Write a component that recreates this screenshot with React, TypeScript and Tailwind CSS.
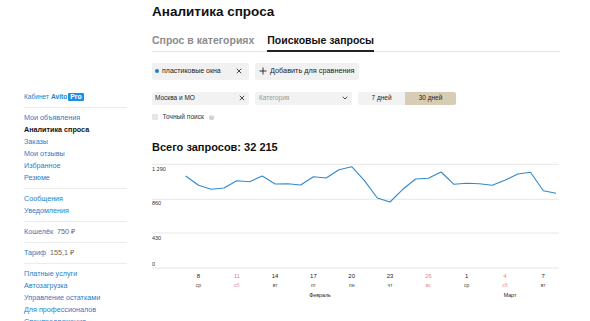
import React from 'react';

const font = { fontFamily: '"Liberation Sans", Arial, sans-serif' };

const groups: { label: string; extra?: string; active?: boolean }[][] = [
    [
        { label: 'Мои объявления' },
        { label: 'Аналитика спроса', active: true },
        { label: 'Заказы' },
        { label: 'Мои отзывы' },
        { label: 'Избранное' },
        { label: 'Резюме' },
    ],
    [{ label: 'Сообщения' }, { label: 'Уведомления' }],
    [{ label: 'Кошелёк', extra: '750 ₽' }],
    [{ label: 'Тариф', extra: '155,1 ₽' }],
    [
        { label: 'Платные услуги' },
        { label: 'Автозагрузка' },
        { label: 'Управление остатками' },
        { label: 'Для профессионалов' },
        { label: 'Спецпредложения' },
    ],
];

// запросов в день, 7 февраля — 8 марта
const values = [
    1144, 1029, 979, 995, 1086, 1074, 1144, 1045, 1049, 1033, 1136, 1120, 1223, 1260, 1086,
    871, 821, 979, 1107, 1116, 1194, 1041, 1054, 1049, 1029, 1091, 1169, 1190, 962, 929,
];

const ticks = [
    { i: 1, d: '8', w: 'ср' },
    { i: 4, d: '11', w: 'сб', red: true },
    { i: 7, d: '14', w: 'вт' },
    { i: 10, d: '17', w: 'пт' },
    { i: 13, d: '20', w: 'пн' },
    { i: 16, d: '23', w: 'чт' },
    { i: 19, d: '26', w: 'вс', red: true },
    { i: 22, d: '1', w: 'ср' },
    { i: 25, d: '4', w: 'сб', red: true },
    { i: 28, d: '7', w: 'вт' },
];

function Sidebar() {
    return (
        <div className="w-[152px] shrink-0 pl-[24px] pt-[91px]">
            <div className="w-[103px]">
                <div className="flex h-[12px] items-center text-[6.6px] text-[#2a7dc6]">
                    <span>Кабинет</span>
                    <span className="ml-[2px] font-bold">Avito</span>
                    <span className="ml-[1px] rounded-[1px] bg-[#1b8ee6] px-[2px] text-[6.8px] leading-[8.5px] font-bold text-white">Pro</span>
                </div>
                {groups.map((g, gi) => (
                    <div key={gi}>
                        <div className="my-[4px] h-px bg-[#ececec]" />
                        {g.map((it) => (
                            <div key={it.label} className="flex h-[12px] items-center text-[7.2px]">
                                <span className={it.active ? 'font-bold text-[#111]' : 'text-[#2a7dc6]'}>{it.label}</span>
                                {it.extra && <span className="ml-[4px] text-[#666]">{it.extra}</span>}
                            </div>
                        ))}
                    </div>
                ))}
            </div>
        </div>
    );
}

function Cross() {
    return (
        <svg width="6" height="6" viewBox="0 0 6 6" className="shrink-0">
            <path d="M0.8 0.8 L5.2 5.2 M5.2 0.8 L0.8 5.2" stroke="#333" strokeWidth="0.9" />
        </svg>
    );
}

function Chart() {
    const x0 = 33.7;
    const step = 12.77;
    const yOf = (v: number) => 108 - (v / 1290) * 103.7;
    const pts = values.map((v, i) => `${(x0 + i * step).toFixed(1)},${yOf(v).toFixed(1)}`).join(' ');
    const grid = [
        { y: 4.3, label: '1 290', ty: 11 },
        { y: 39.3, label: '860', ty: 45 },
        { y: 73, label: '430', ty: 80 },
        { y: 108, label: '0', ty: 106 },
    ];
    return (
        <svg width="408" height="141" viewBox="0 0 408 141" className="mt-[6px] block" style={font}>
            {grid.map((g) => (
                <g key={g.label}>
                    <line x1="0" x2="407" y1={g.y} y2={g.y} stroke="#e6e6e6" strokeWidth="1" />
                    <text x="0" y={g.ty} fontSize="5.5" fill="#333">{g.label}</text>
                </g>
            ))}
            <polyline points={pts} fill="none" stroke="#3189cc" strokeWidth="1.1" strokeLinejoin="round" />
            {ticks.map((t) => (
                <g key={t.d} textAnchor="middle" fill={t.red ? '#e98593' : '#222'}>
                    <text x={x0 + t.i * step} y="118" fontSize="6">{t.d}</text>
                    <text x={x0 + t.i * step} y="126.5" fontSize="5" fill={t.red ? '#e98593' : '#444'}>{t.w}</text>
                </g>
            ))}
            <text x="168" y="137" fontSize="5.3" textAnchor="middle" fill="#222">Февраль</text>
            <text x="358" y="137" fontSize="5.3" textAnchor="middle" fill="#222">Март</text>
        </svg>
    );
}

function Main() {
    return (
        <div className="w-[408px] shrink-0">
            <h1 className="pt-[4px] text-[13.5px] leading-[16px] font-bold text-[#111]">Аналитика спроса</h1>
            <div className="mt-[14px] flex gap-[13px] border-b border-[#e6e6e6] text-[10.5px] leading-[12px] font-bold">
                <div className="pb-[5px] text-[#8c8c8c]">Спрос в категориях</div>
                <div className="-mb-px border-b-2 border-[#222] pb-[4px] text-[#111]">Поисковые запросы</div>
            </div>

            <div className="mt-[11px] flex h-[16.5px] gap-[6px] text-[7px] text-[#222]">
                <div className="flex w-[97px] items-center rounded-[2px] bg-[#f1f1f1] pr-[7px] pl-[3px]">
                    <span className="h-[4px] w-[4px] rounded-full bg-[#1f7fd6]" />
                    <span className="ml-[3px] flex-1">пластиковые окна</span>
                    <Cross />
                </div>
                <div className="flex w-[104px] items-center rounded-[2px] bg-[#f1f1f1] pl-[4px] text-[7.3px]">
                    <svg width="8" height="8" viewBox="0 0 8 8">
                        <path d="M4 0.5 V7.5 M0.5 4 H7.5" stroke="#222" strokeWidth="0.9" />
                    </svg>
                    <span className="ml-[3px]">Добавить для сравнения</span>
                </div>
            </div>

            <div className="mt-[12px] flex h-[13.5px] text-[6.5px]">
                <div className="flex w-[97px] items-center rounded-[2px] bg-[#f2f2f2] pr-[4px] pl-[3px] text-[#222]">
                    <span className="flex-1">Москва и МО</span>
                    <Cross />
                </div>
                <div className="ml-[6px] flex w-[97px] items-center rounded-[2px] bg-[#f2f2f2] pr-[4px] pl-[4px] text-[#9a9a9a]">
                    <span className="flex-1">Категория</span>
                    <svg width="6" height="4" viewBox="0 0 6 4">
                        <path d="M0.8 0.8 L3 3 L5.2 0.8" fill="none" stroke="#333" strokeWidth="0.9" />
                    </svg>
                </div>
                <div className="ml-[6px] flex overflow-hidden rounded-[2px] text-[#222]">
                    <div className="flex w-[47px] items-center justify-center bg-[#f2f2f2]">7 дней</div>
                    <div className="flex w-[51px] items-center justify-center bg-[#d8cdb4]">30 дней</div>
                </div>
            </div>

            <div className="mt-[9px] flex h-[6.5px] items-center text-[6.6px] text-[#333]">
                <span className="h-[6px] w-[6px] rounded-[1px] bg-[#e6e6e6]" />
                <span className="ml-[4.5px]">Точный поиск</span>
                <span className="ml-[5px] flex h-[5px] w-[5px] items-center justify-center rounded-full bg-[#cfcfcf] text-[4px] leading-none text-white">?</span>
            </div>

            <div className="mt-[19.5px] text-[11px] leading-[14px] font-bold text-[#111]">Всего запросов: 32 215</div>

            <Chart />
        </div>
    );
}

export default function App() {
    return (
        <div className="flex h-[321px] w-[590px] overflow-hidden bg-white" style={font}>
            <Sidebar />
            <Main />
        </div>
    );
}
